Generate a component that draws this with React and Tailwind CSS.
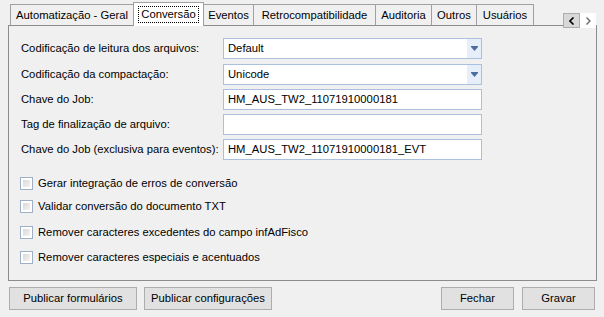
import React from "react";

const font = { fontFamily: '"Liberation Sans", Arial, sans-serif' };

const tabs = [
  { label: "Automatização - Geral", w: "w-[124px]" },
  { label: "Conversão", w: "w-[71px]", active: true },
  { label: "Eventos", w: "w-[51px]" },
  { label: "Retrocompatibilidade", w: "w-[123px]" },
  { label: "Auditoria", w: "w-[57px]" },
  { label: "Outros", w: "w-[46px]" },
  { label: "Usuários", w: "w-[58px]" },
];

function Tab({ label, w, active }) {
  if (active) {
    return (
      <div
        className={`${w} shrink-0 relative z-10 -ml-px -mb-px h-[24px] bg-white border border-b-0 border-[#a0a0a0] flex items-start justify-center pt-[3px]`}
      >
        <span className="px-[2px] leading-[15px] border border-dotted border-black">{label}</span>
      </div>
    );
  }
  return (
    <div
      className={`${w} shrink-0 -ml-px first:ml-0 h-[21px] bg-[#f0f0f0] border border-b-0 border-[#a0a0a0] flex items-center justify-center whitespace-nowrap`}
    >
      {label}
    </div>
  );
}

function Combo({ value }) {
  return (
    <div className="w-[259px] h-[21px] bg-white border border-[#abc0dd] flex">
      <div className="flex-1 pl-[4px] flex items-center">{value}</div>
      <div className="w-[14px] bg-[#e6eefa] flex items-center justify-center">
        <svg width="7" height="5" viewBox="0 0 7 5">
          <rect x="0" y="0" width="7" height="1" fill="#4d6d9f" />
          <path d="M0 1 H7 L3.5 5 Z" fill="#4d6d9f" />
        </svg>
      </div>
    </div>
  );
}

function TextBox({ value }) {
  return (
    <div className="w-[259px] h-[21px] bg-white border border-[#abc0dd] pl-[4px] flex items-center">
      {value}
    </div>
  );
}

function Row({ label, children, className = "" }) {
  return (
    <div className={`flex items-center ${className}`}>
      <div className="w-[214px] shrink-0 pl-[12px] whitespace-nowrap">{label}</div>
      {children}
    </div>
  );
}

function Check({ label, className = "" }) {
  return (
    <div className={`flex items-center h-[13px] pl-[11px] ${className}`}>
      <div className="w-[13px] h-[13px] border border-[#9fb0c6] bg-white p-[2px]">
        <div className="w-full h-full bg-gradient-to-br from-[#d9d9d9] to-[#f3f3f3]" />
      </div>
      <span className="ml-[5px] whitespace-nowrap">{label}</span>
    </div>
  );
}

function Button({ children, w }) {
  return (
    <div
      className={`${w} h-[23px] bg-[#e1e1e1] border border-[#adadad] flex items-center justify-center whitespace-nowrap`}
    >
      {children}
    </div>
  );
}

export default function App() {
  return (
    <div
      className="w-[604px] h-[317px] bg-[#f0f0f0] text-[11.25px] text-black overflow-hidden"
      style={font}
    >
      {/* Tab strip */}
      <div className="flex items-end h-[25px] pt-[4px]">
        <div className="flex items-end pl-[10px]">
          {tabs.map((t) => (
            <Tab key={t.label} {...t} />
          ))}
        </div>
        <div className="ml-[29px] mb-px flex self-start mt-[9px]">
          <div className="w-[17px] h-[15px] bg-[#d8d8d8] border border-[#adadad] flex items-center justify-center">
            <svg width="6" height="8" viewBox="0 0 6 8">
              <path d="M4.5 0.5 L1 4 L4.5 7.5" stroke="#000" strokeWidth="1.6" fill="none" />
            </svg>
          </div>
          <div className="w-[16px] h-[15px] bg-white flex items-center justify-center">
            <svg width="6" height="8" viewBox="0 0 6 8">
              <path d="M1.5 0.5 L5 4 L1.5 7.5" stroke="#6b6b6b" strokeWidth="1.4" fill="none" />
            </svg>
          </div>
        </div>
      </div>

      {/* Panel */}
      <div className="ml-[8px] w-[589px] h-[256px] border border-[#8c8c8c] bg-[#f0f0f0] pt-[12px]">
        <Row label="Codificação de leitura dos arquivos:">
          <Combo value="Default" />
        </Row>
        <Row label="Codificação da compactação:" className="mt-[5px]">
          <Combo value="Unicode" />
        </Row>
        <Row label="Chave do Job:" className="mt-[4px]">
          <TextBox value="HM_AUS_TW2_11071910000181" />
        </Row>
        <Row label="Tag de finalização de arquivo:" className="mt-[4px]">
          <TextBox value="" />
        </Row>
        <Row label="Chave do Job (exclusiva para eventos):" className="mt-[4px]">
          <TextBox value="HM_AUS_TW2_11071910000181_EVT" />
        </Row>

        <Check label="Gerar integração de erros de conversão" className="mt-[17px]" />
        <Check label="Validar conversão do documento TXT" className="mt-[10px]" />
        <Check label="Remover caracteres excedentes do campo infAdFisco" className="mt-[13px]" />
        <Check label="Remover caracteres especiais e acentuados" className="mt-[12px]" />
      </div>

      {/* Bottom buttons */}
      <div className="flex mt-[6px] px-[9px]">
        <Button w="w-[128px]">Publicar formulários</Button>
        <div className="ml-[7px]">
          <Button w="w-[128px]">Publicar configurações</Button>
        </div>
        <div className="ml-auto flex gap-[8px]">
          <Button w="w-[73px]">Fechar</Button>
          <Button w="w-[73px]">Gravar</Button>
        </div>
      </div>
    </div>
  );
}
